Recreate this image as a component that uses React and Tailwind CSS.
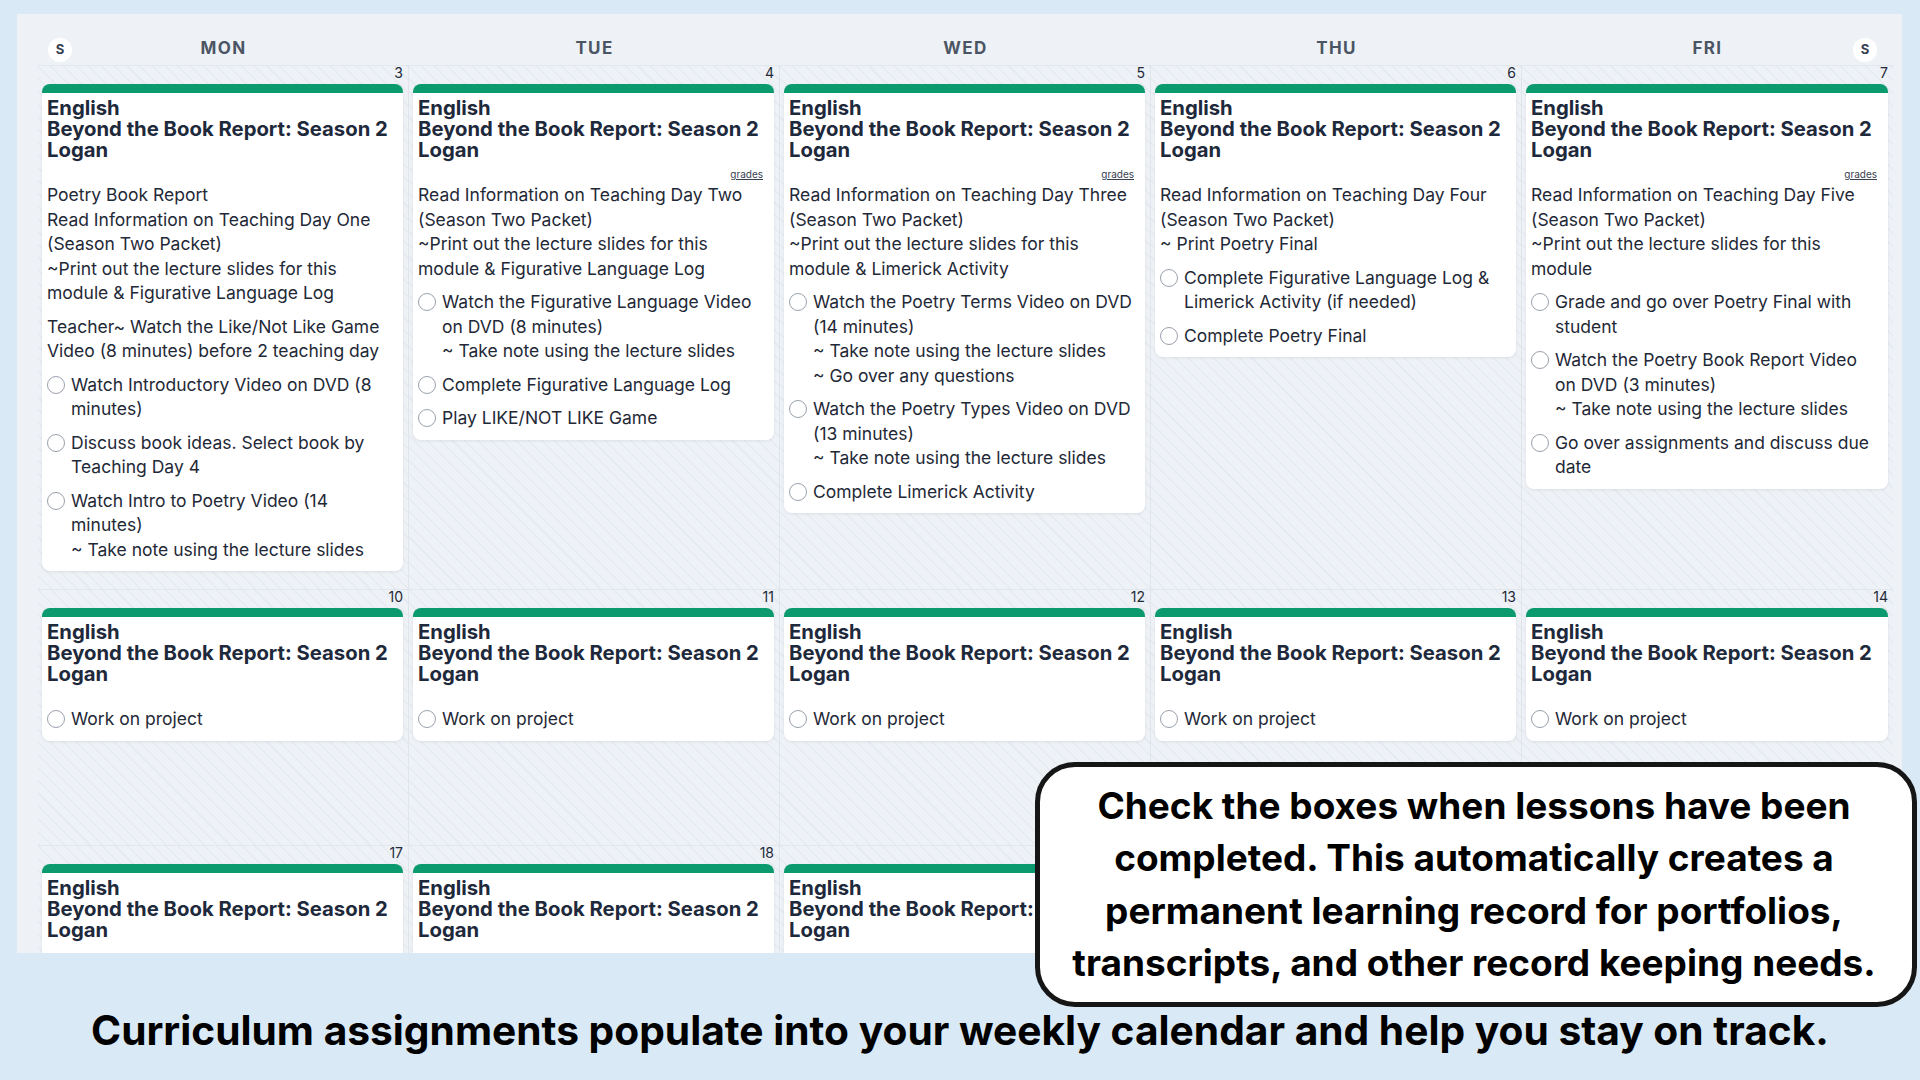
import React from 'react';

const weekdays = ['MON', 'TUE', 'WED', 'THU', 'FRI'];

const title = ['English', 'Beyond the Book Report: Season 2', 'Logan'];

// week one lessons, one entry per weekday
const firstWeek = [
  {
    date: 3,
    grades: false,
    notes: [
      [
        'Poetry Book Report',
        'Read Information on Teaching Day One',
        '(Season Two Packet)',
        '~Print out the lecture slides for this',
        'module & Figurative Language Log',
      ],
      ['Teacher~ Watch the Like/Not Like Game', 'Video (8 minutes) before 2 teaching day'],
    ],
    tasks: [
      ['Watch Introductory Video on DVD (8', 'minutes)'],
      ['Discuss book ideas. Select book by', 'Teaching Day 4'],
      ['Watch Intro to Poetry Video (14', 'minutes)', '~ Take note using the lecture slides'],
    ],
  },
  {
    date: 4,
    grades: true,
    notes: [
      [
        'Read Information on Teaching Day Two',
        '(Season Two Packet)',
        '~Print out the lecture slides for this',
        'module & Figurative Language Log',
      ],
    ],
    tasks: [
      ['Watch the Figurative Language Video', 'on DVD (8 minutes)', '~ Take note using the lecture slides'],
      ['Complete Figurative Language Log'],
      ['Play LIKE/NOT LIKE Game'],
    ],
  },
  {
    date: 5,
    grades: true,
    notes: [
      [
        'Read Information on Teaching Day Three',
        '(Season Two Packet)',
        '~Print out the lecture slides for this',
        'module & Limerick Activity',
      ],
    ],
    tasks: [
      [
        'Watch the Poetry Terms Video on DVD',
        '(14 minutes)',
        '~ Take note using the lecture slides',
        '~ Go over any questions',
      ],
      ['Watch the Poetry Types Video on DVD', '(13 minutes)', '~ Take note using the lecture slides'],
      ['Complete Limerick Activity'],
    ],
  },
  {
    date: 6,
    grades: false,
    notes: [['Read Information on Teaching Day Four', '(Season Two Packet)', '~ Print Poetry Final']],
    tasks: [
      ['Complete Figurative Language Log &', 'Limerick Activity (if needed)'],
      ['Complete Poetry Final'],
    ],
  },
  {
    date: 7,
    grades: true,
    notes: [
      [
        'Read Information on Teaching Day Five',
        '(Season Two Packet)',
        '~Print out the lecture slides for this',
        'module',
      ],
    ],
    tasks: [
      ['Grade and go over Poetry Final with', 'student'],
      ['Watch the Poetry Book Report Video', 'on DVD (3 minutes)', '~ Take note using the lecture slides'],
      ['Go over assignments and discuss due', 'date'],
    ],
  },
];

const projectWeek = (start) =>
  [0, 1, 2, 3, 4].map((i) => ({
    date: start + i,
    grades: false,
    notes: [],
    tasks: [['Work on project']],
  }));

const weeks = [firstWeek, projectWeek(10), projectWeek(17)];

const hatch =
  'bg-[repeating-linear-gradient(45deg,#e6ebf1_0px,#e6ebf1_1.5px,transparent_1.5px,transparent_9px)]';

const LessonCard = ({ lesson }) => (
  <div className="rounded-lg border-t-[9px] border-[#0a9a6d] bg-white px-[5px] pt-[4px] pb-[9px] shadow-[0_1px_3px_rgba(15,23,42,0.08)]">
    <div className="text-[20.3px] font-bold leading-[21px] text-[#1e293b]">
      {title.map((t) => (
        <div key={t} className="whitespace-nowrap">
          {t}
        </div>
      ))}
    </div>
    <div className="flex h-[23px] items-end justify-end pb-[3px] pr-[6px]">
      {lesson.grades && (
        <span className="text-[10px] leading-[12px] text-[#374151] underline">grades</span>
      )}
    </div>
    <div className="flex flex-col gap-[9px] text-[17.5px] leading-[24.5px] text-[#1f2937]">
      {lesson.notes.map((lines, i) => (
        <div key={'n' + i}>
          {lines.map((l) => (
            <div key={l} className="whitespace-nowrap">
              {l}
            </div>
          ))}
        </div>
      ))}
      {lesson.tasks.map((lines, i) => (
        <div key={'t' + i} className="flex gap-[6px]">
          <span className="mt-[3.25px] size-[18px] shrink-0 rounded-full border-[1.5px] border-[#9aa1ab] bg-white" />
          <div>
            {lines.map((l) => (
              <div key={l} className="whitespace-nowrap">
                {l}
              </div>
            ))}
          </div>
        </div>
      ))}
    </div>
  </div>
);

const DayBadge = ({ className }) => (
  <span
    className={
      'absolute top-[24px] flex size-[24px] items-center justify-center rounded-full bg-white text-[13px] font-bold text-[#374151] ' +
      className
    }
  >
    S
  </span>
);

export default function App() {
  return (
    <div className="relative flex h-[1080px] w-[1920px] flex-col overflow-hidden bg-[#d9e9f5] font-['Inter','Noto_Sans',sans-serif]">
      <div className="ml-[17px] mt-[14px] h-[939px] w-[1885px] overflow-hidden bg-[#eef2f7] pl-[21px] pr-[9px]">
        {/* weekday header */}
        <div className="grid h-[51px] grid-cols-[repeat(5,371px)]">
          {weekdays.map((d, i) => (
            <div key={d} className="relative flex justify-center pt-[24px]">
              {i === 0 && <DayBadge className="left-[10px]" />}
              <span className="text-[17px] font-bold leading-[20px] tracking-[0.08em] text-[#4b5563]">{d}</span>
              {i === 4 && <DayBadge className="right-[16px]" />}
            </div>
          ))}
        </div>

        {weeks.map((week, w) => (
          <div key={w} className="grid min-h-[256px] grid-cols-[repeat(5,371px)] border-t border-[#e2e7ee]">
            {week.map((lesson, i) => (
              <div
                key={lesson.date}
                className={
                  'flex flex-col pb-[18px] pl-[4px] pr-[5px] ' +
                  hatch +
                  (i < 4 ? ' border-r border-[#e0e5ec]' : '')
                }
              >
                <div className="h-[18px] text-right text-[14px] leading-[14px] text-[#1f2937]">{lesson.date}</div>
                <LessonCard lesson={lesson} />
              </div>
            ))}
          </div>
        ))}
      </div>

      <p className="pt-[54px] text-center text-[40.7px] font-bold leading-[48px] text-black">
        Curriculum assignments populate into your weekly calendar and help you stay on track.
      </p>

      {/* callout over the calendar */}
      <div className="absolute left-[1035px] top-[762px] flex h-[245px] w-[882px] flex-col items-center justify-center rounded-[40px] border-[5px] border-[#161616] bg-white pr-[4px] text-center text-[37px] font-bold leading-[52.5px] text-black">
        <div className="whitespace-nowrap">Check the boxes when lessons have been</div>
        <div className="whitespace-nowrap">completed. This automatically creates a</div>
        <div className="whitespace-nowrap">permanent learning record for portfolios,</div>
        <div className="whitespace-nowrap">transcripts, and other record keeping needs.</div>
      </div>
    </div>
  );
}
